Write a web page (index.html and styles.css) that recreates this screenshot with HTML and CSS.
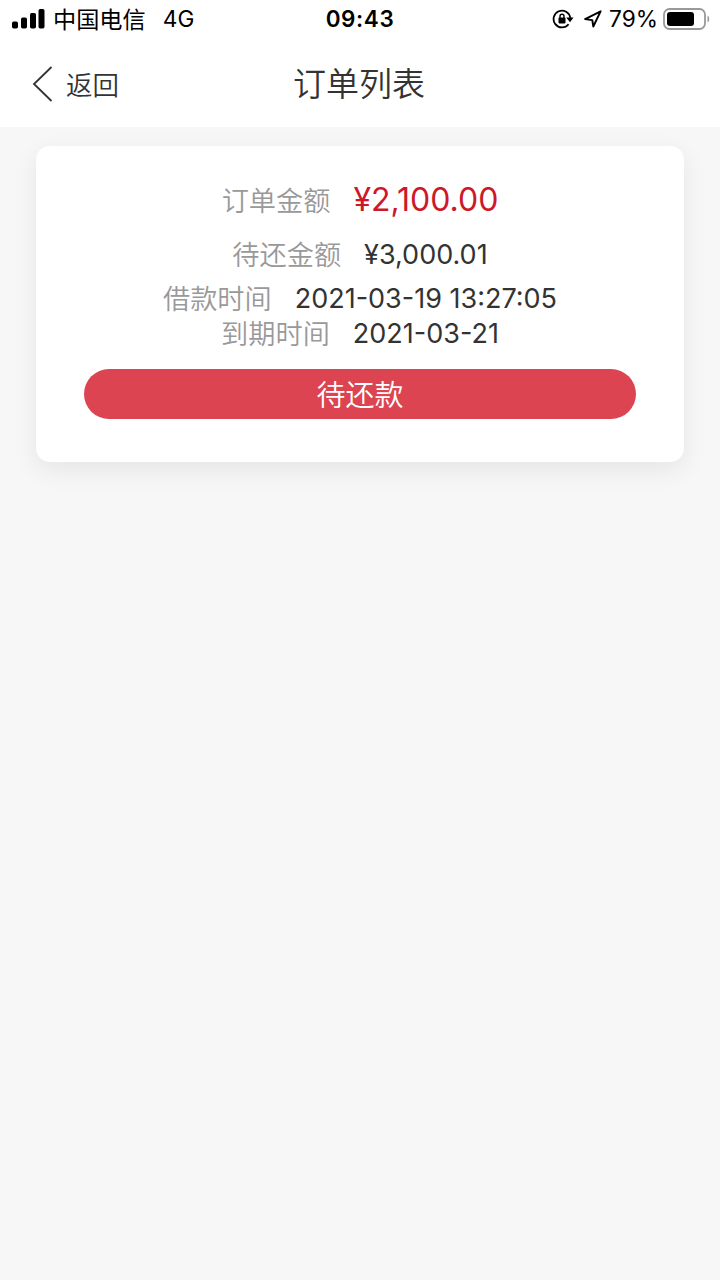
FILE: index.html
```
<!DOCTYPE html>
<html lang="zh-CN">
<head>
<meta charset="utf-8">
<title>订单列表</title>
<link rel="stylesheet" href="styles.css">
</head>
<body>
<header class="top">
  <div class="status">
    <div class="status-left">
      <svg class="signal" width="33" height="20" viewBox="0 0 33 20"><rect x="0" y="12.5" width="6" height="7" rx="1.7"/><rect x="9" y="8.5" width="6" height="11" rx="1.7"/><rect x="18" y="4" width="6" height="15.5" rx="1.7"/><rect x="26.5" y="0" width="6" height="19.5" rx="1.7"/></svg>
      <span class="carrier">中国电信</span>
      <span class="network">4G</span>
    </div>
    <time class="clock">09:43</time>
    <div class="status-right">
      <svg class="lock" width="22" height="20" viewBox="0 0 22 20"><path d="M16.6 15.2A8.4 8.4 0 1 1 18.3 8.8" fill="none" stroke="#000" stroke-width="1.8"/><path d="M14.2 8.4h7.4l-3.6 4.8z"/><rect x="6.5" y="8.6" width="7" height="5.8" rx=".8"/><path d="M8 9V7.3a2 2 0 0 1 4 0V9" fill="none" stroke="#000" stroke-width="1.4"/></svg>
      <svg class="location" width="18" height="18" viewBox="0 0 18 18"><path d="M16.6 1.3 1.1 9.1l7.2 1 1 6.4z" fill="none" stroke="#000" stroke-width="1.9" stroke-linejoin="round"/></svg>
      <span class="percent">79%</span>
      <svg class="battery" width="47" height="22" viewBox="0 0 47 22"><rect x="1" y="1" width="41" height="20" rx="5.5" fill="none" stroke="#999" stroke-width="1.8"/><rect x="4" y="4" width="27" height="14" rx="3"/><path d="M44.5 7.5c2.3 1 2.3 6 0 7z" fill="#999"/></svg>
    </div>
  </div>
  <nav class="nav">
    <a class="back"><svg width="21" height="36" viewBox="0 0 21 36"><path d="M19.5 1 2 18l17.5 17" fill="none" stroke="#333" stroke-width="1.8"/></svg><span>返回</span></a>
    <h1 class="title">订单列表</h1>
  </nav>
</header>
<main class="list">
  <article class="card">
    <div class="row row-total"><span class="label">订单金额</span><span class="value total">¥2,100.00</span></div>
    <div class="row row-due"><span class="label">待还金额</span><span class="value due">¥3,000.01</span></div>
    <div class="row row-start"><span class="label">借款时间</span><span class="value start">2021-03-19 13:27:05</span></div>
    <div class="row row-end"><span class="label">到期时间</span><span class="value end">2021-03-21</span></div>
    <button class="pay">待还款</button>
  </article>
</main>
</body>
</html>
```
FILE: styles.css
```
* { box-sizing: border-box; }
body {
  margin: 0;
  min-height: 1280px;
  background: #f7f7f7;
  color: #333;
  font-family: Inter, "Noto Sans CJK SC", sans-serif;
}
svg { display: block; flex: none; }
.top { height: 127px; background: #fff; }
.status {
  display: grid;
  grid-template-columns: 1fr auto 1fr;
  align-items: center;
  height: 40px;
  padding: 0 10px 0 12px;
  color: #000;
  font-size: 23px;
  line-height: 38px;
  white-space: nowrap;
}
.status-left, .status-right { display: flex; align-items: center; height: 38px; margin-bottom: 2px; }
.status-right { justify-content: flex-end; }
.carrier { margin: 1px 0 0 8px; font-size: 23.2px; font-weight: 370; }
.network { margin-left: 17px; font-size: 22.7px; }
.clock { margin: 0 2px 2px 0; font-size: 22.5px; font-weight: 600; letter-spacing: .6px; }
.location { margin: 0 7px 0 10px; }
.percent { font-size: 22.7px; }
.battery { margin: -1px 0 0 5px; }
.nav {
  display: grid;
  grid-template-columns: 1fr auto 1fr;
  height: 87px;
}
.back {
  display: flex;
  align-items: center;
  gap: 13px;
  height: 87px;
  padding-left: 32px;
  font-size: 26.5px;
  font-weight: 350;
}
.title { margin: 2px 2px 0 0; font-size: 33px; font-weight: 350; line-height: 85px; }
.list { padding: 19px 36px; }
.card {
  height: 316px;
  padding: 25px 48px 0;
  border-radius: 14px;
  background: #fff;
  box-shadow: 0 8px 26px rgba(0, 0, 0, .075);
}
.row {
  display: flex;
  justify-content: center;
  align-items: center;
  gap: 23px;
  white-space: nowrap;
}
.label { margin-bottom: 2px; color: #999; font-size: 27.2px; font-weight: 350; }
.value { font-size: 27px; }
.row-total { height: 58px; }
.row-due { height: 50px; }
.row-start { height: 37px; }
.row-end { height: 34px; }
.total { margin-bottom: 2px; color: #cd1829; font-size: 32px; }
.start { margin-top: 2px; }
.pay {
  display: block;
  width: 100%;
  height: 50px;
  margin-top: 19px;
  padding: 3px 0 0;
  border: 0;
  border-radius: 25px;
  background: #dc4451;
  color: #fff;
  font: 350 29px/47px Inter, "Noto Sans CJK SC", sans-serif;
}
```
